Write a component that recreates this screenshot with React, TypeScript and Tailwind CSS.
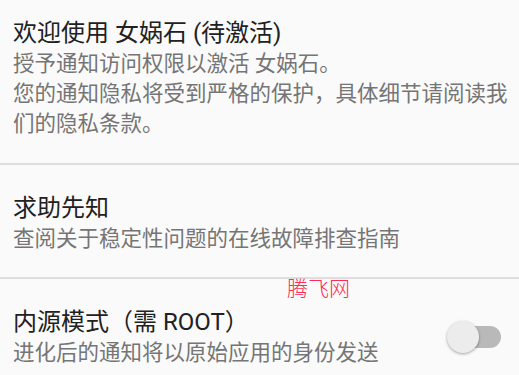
import React from 'react';

const font = { fontFamily: 'Roboto, "Noto Sans CJK SC", sans-serif' };

function Toggle() {
  // unchecked material switch
  return (
    <div className="relative w-[54px] h-[32px] shrink-0">
      <div className="absolute left-[4px] right-0 top-[5px] h-[22px] rounded-full bg-[#b9b9b9]" />
      <div className="absolute left-0 top-0 w-[32px] h-[32px] rounded-full bg-[#ececec] shadow-[0_1px_3px_rgba(0,0,0,0.35)]" />
    </div>
  );
}

function Item({
  title,
  children,
  className,
  right,
}: {
  title: string;
  children: React.ReactNode;
  className: string;
  right?: React.ReactNode;
}) {
  return (
    <div className={`flex items-center pl-[13px] pr-[18px] ${className}`}>
      <div className="flex-1 min-w-0">
        <div className="text-[24px] leading-[32px] text-[#212121] whitespace-nowrap">{title}</div>
        <div className="text-[21.5px] leading-[30px] text-[#757575] whitespace-nowrap">{children}</div>
      </div>
      {right}
    </div>
  );
}

export default function App() {
  return (
    <div className="relative w-[519px] h-[375px] overflow-hidden bg-[#fafafa]" style={font}>
      <Item title="欢迎使用 女娲石 (待激活)" className="pt-[17px] pb-[24px]">
        授予通知访问权限以激活 女娲石。
        <br />
        您的通知隐私将受到严格的保护，具体细节请阅读我
        <br />
        们的隐私条款。
      </Item>
      <div className="h-[2px] bg-[#dedede]" />
      <Item title="求助先知" className="pt-[27px] pb-[23px]">
        查阅关于稳定性问题的在线故障排查指南
      </Item>
      <div className="h-[2px] bg-[#dedede]" />
      <Item title="内源模式（需 ROOT）" className="pt-[27px] pb-[10px]" right={<Toggle />}>
        进化后的通知将以原始应用的身份发送
      </Item>

      {/* watermark */}
      <div
        className="absolute left-[287px] top-[274px] text-[21px] leading-[26px] text-[#ff2a55] font-light"
        style={{ fontFamily: '"Noto Sans CJK SC", sans-serif' }}
      >
        腾飞网
      </div>
    </div>
  );
}
